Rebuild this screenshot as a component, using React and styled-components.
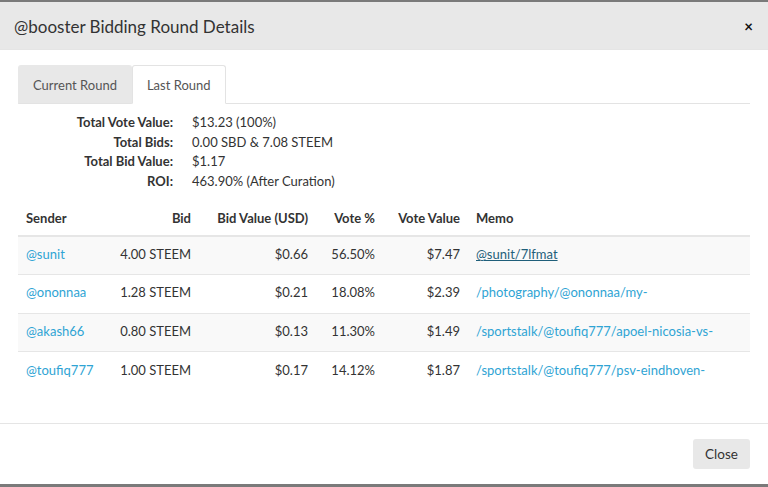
import React from "react";
import styled, { createGlobalStyle } from "styled-components";

const Global = createGlobalStyle`
  html, body { margin: 0; padding: 0; background: #7a7a7a; }
  body { font-family: Lato, "Noto Sans", sans-serif; color: #333; font-size: 13px; }
  * { box-sizing: border-box; }
`;

const Modal = styled.div`
  margin-top: 2px;
  height: 482px;
  background: #fff;
  display: flex;
  flex-direction: column;
`;

const Header = styled.div`
  background: #e8e8e8;
  height: 48px;
  padding: 0 14px;
  display: flex;
  align-items: center;
  justify-content: space-between;
  border-bottom: 1px solid #e5e5e5;
`;

const Title = styled.h4`
  margin: 0;
  font-size: 17px;
  font-weight: 400;
  color: #333;
  padding-top: 2px;
`;

const CloseX = styled.span`
  font-size: 15px;
  font-weight: 700;
  color: #111;
  margin-right: 1px;
`;

const Body = styled.div`
  flex: 1;
  padding: 15px 18px 0;
`;

const Tabs = styled.div`
  display: flex;
  border-bottom: 1px solid #e3e3e3;
`;

const Tab = styled.div`
  padding: 0 14px;
  height: 39px;
  display: flex;
  align-items: center;
  margin-bottom: -1px;
  border: 1px solid ${(p) => (p.$active ? "#e3e3e3" : "#e8e8e8")};
  border-bottom-color: ${(p) => (p.$active ? "#fff" : "#e3e3e3")};
  border-radius: 3px 3px 0 0;
  background: ${(p) => (p.$active ? "#fff" : "#e8e8e8")};
  color: #555;
  font-size: 13px;
`;

const Summary = styled.dl`
  display: grid;
  grid-template-columns: 155px 1fr;
  column-gap: 19px;
  margin: 9px 0 0;
  line-height: 19.5px;
`;

const Dt = styled.dt`
  text-align: right;
  font-weight: 700;
`;

const Dd = styled.dd`
  margin: 0;
`;

const Table = styled.table`
  width: 100%;
  table-layout: fixed;
  border-collapse: collapse;
  margin-top: 10px;
`;

const Th = styled.th`
  text-align: ${(p) => (p.$right ? "right" : "left")};
  font-weight: 700;
  padding: 0 8px 1px;
  height: 35px;
  vertical-align: middle;
  border-bottom: 2px solid #e6e6e6;
`;

const Tr = styled.tr`
  background: ${(p) => (p.$striped ? "#f9f9f9" : "#fff")};
`;

const Td = styled.td`
  text-align: ${(p) => (p.$right ? "right" : "left")};
  padding: 0 8px 3px;
  height: 38.5px;
  border-top: 1px solid #e6e6e6;
  white-space: nowrap;
  overflow: hidden;
`;

const Link = styled.a`
  color: ${(p) => (p.$dark ? "#1f5f7a" : "#2fa4d4")};
  text-decoration: ${(p) => (p.$dark ? "underline" : "none")};
`;

const Footer = styled.div`
  height: 61px;
  border-top: 1px solid #e5e5e5;
  display: flex;
  align-items: center;
  justify-content: flex-end;
  padding: 0 18px;
`;

const Button = styled.button`
  font-family: inherit;
  font-size: 13.5px;
  color: #333;
  background: #e8e8e8;
  border: none;
  border-radius: 3px;
  height: 30px;
  width: 57px;
  padding: 0;
`;

const colWidths = [82, 99, 117, 67, 85, 282];

const rows = [
  ["@sunit", "4.00 STEEM", "$0.66", "56.50%", "$7.47", "@sunit/7lfmat", true],
  ["@ononnaa", "1.28 STEEM", "$0.21", "18.08%", "$2.39", "/photography/@ononnaa/my-"],
  ["@akash66", "0.80 STEEM", "$0.13", "11.30%", "$1.49", "/sportstalk/@toufiq777/apoel-nicosia-vs-"],
  ["@toufiq777", "1.00 STEEM", "$0.17", "14.12%", "$1.87", "/sportstalk/@toufiq777/psv-eindhoven-"],
];

export default function App() {
  return (
    <>
      <Global />
      <Modal>
        <Header>
          <Title>@booster Bidding Round Details</Title>
          <CloseX>×</CloseX>
        </Header>
        <Body>
          <Tabs>
            <Tab>Current Round</Tab>
            <Tab $active>Last Round</Tab>
          </Tabs>
          <Summary>
            <Dt>Total Vote Value:</Dt>
            <Dd>$13.23 (100%)</Dd>
            <Dt>Total Bids:</Dt>
            <Dd>0.00 SBD &amp; 7.08 STEEM</Dd>
            <Dt>Total Bid Value:</Dt>
            <Dd>$1.17</Dd>
            <Dt>ROI:</Dt>
            <Dd>463.90% (After Curation)</Dd>
          </Summary>
          <Table>
            <colgroup>
              {colWidths.map((w, i) => (
                <col key={i} width={w} />
              ))}
            </colgroup>
            <thead>
              <tr>
                <Th>Sender</Th>
                <Th $right>Bid</Th>
                <Th $right>Bid Value (USD)</Th>
                <Th $right>Vote %</Th>
                <Th $right>Vote Value</Th>
                <Th>Memo</Th>
              </tr>
            </thead>
            <tbody>
              {rows.map((r, i) => (
                <Tr key={i} $striped={i % 2 === 0}>
                  <Td><Link>{r[0]}</Link></Td>
                  <Td $right>{r[1]}</Td>
                  <Td $right>{r[2]}</Td>
                  <Td $right>{r[3]}</Td>
                  <Td $right>{r[4]}</Td>
                  <Td><Link $dark={r[6]}>{r[5]}</Link></Td>
                </Tr>
              ))}
            </tbody>
          </Table>
        </Body>
        <Footer>
          <Button>Close</Button>
        </Footer>
      </Modal>
    </>
  );
}
